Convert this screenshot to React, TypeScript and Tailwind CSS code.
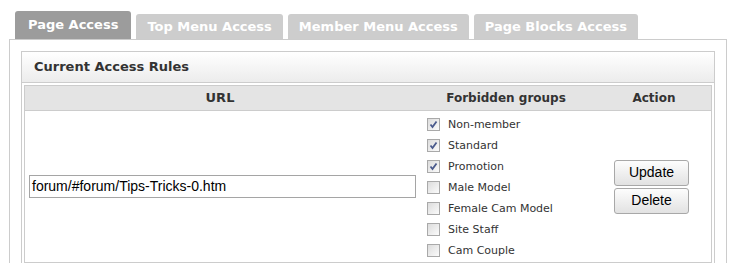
import React from "react";

const groups: { name: string; checked: boolean }[] = [
  { name: "Non-member", checked: true },
  { name: "Standard", checked: true },
  { name: "Promotion", checked: true },
  { name: "Male Model", checked: false },
  { name: "Female Cam Model", checked: false },
  { name: "Site Staff", checked: false },
  { name: "Cam Couple", checked: false },
];

function Check({ checked }: { checked: boolean }) {
  return (
    <span className="flex h-[13px] w-[13px] shrink-0 items-center justify-center border border-[#a9a9a9] bg-gradient-to-br from-[#dcdcdc] to-[#fbfbfb]">
      {checked && (
        <svg width="9" height="9" viewBox="0 0 9 9">
          <path d="M1.5 4.5 L3.5 7 L7.5 1.5" fill="none" stroke="#4a5a8c" strokeWidth="1.8" />
        </svg>
      )}
    </span>
  );
}

function Btn({ label }: { label: string }) {
  return (
    <button className="h-[26px] w-[75px] rounded-[3px] border border-[#a8a8a8] bg-gradient-to-b from-[#fdfdfd] to-[#e2e2e2] text-[14px] text-black [font-family:'Liberation_Sans',Arial,sans-serif]">
      {label}
    </button>
  );
}

export default function App() {
  const tabs = ["Top Menu Access", "Member Menu Access", "Page Blocks Access"];
  return (
    <div className="h-[267px] w-[730px] overflow-hidden bg-white [font-family:'DejaVu_Sans',Verdana,sans-serif]">
      <div className="flex items-end gap-[5px] pl-[15px] pt-[11px]">
        <div className="flex h-[28px] items-center rounded-t-[3px] bg-[#9c9c9c] px-[13px] text-[13px] font-bold text-white">
          Page Access
        </div>
        {tabs.map((t) => (
          <div
            key={t}
            className="flex h-[25px] items-center rounded-t-[3px] bg-[#cdcdcd] px-[11px] text-[13px] font-bold text-white"
          >
            {t}
          </div>
        ))}
      </div>
      <div className="ml-[9px] w-[718px] border border-b-0 border-[#cccccc] px-[11px] pt-[11px]">
        <div className="border border-b-0 border-[#cccccc]">
          <div className="flex h-[31px] items-center border-b border-[#cccccc] bg-gradient-to-b from-white to-[#ececec] pl-[12px] text-[13px] font-bold text-[#333]">
            Current Access Rules
          </div>
          <div className="mx-[2px] mt-[2px] border border-[#cccccc]">
            <div className="grid h-[25px] grid-cols-[390px_182px_1fr] items-center border-b border-[#cccccc] bg-[#e4e4e4] text-[12px] font-bold text-[#333]">
              <div className="text-center text-[13px]">URL</div>
              <div className="text-center">Forbidden groups</div>
              <div className="text-center">Action</div>
            </div>
            <div className="grid h-[151px] grid-cols-[390px_182px_1fr] items-center">
              <div className="pl-[4px]">
                <div className="flex h-[23px] w-[387px] items-center border border-[#a5a5a5] pl-[2px] text-[14px] text-black [font-family:'Liberation_Sans',Arial,sans-serif]">
                  forum/#forum/Tips-Tricks-0.htm
                </div>
              </div>
              <div className="flex flex-col gap-[8px] pl-[12px] pt-[2px]">
                {groups.map((g) => (
                  <div key={g.name} className="flex items-center gap-[8px] text-[11px] leading-[13px] text-[#333]">
                    <Check checked={g.checked} />
                    <span>{g.name}</span>
                  </div>
                ))}
              </div>
              <div className="flex flex-col items-start gap-[2px] pl-[17px]">
                <Btn label="Update" />
                <Btn label="Delete" />
              </div>
            </div>
          </div>
        </div>
      </div>
    </div>
  );
}
